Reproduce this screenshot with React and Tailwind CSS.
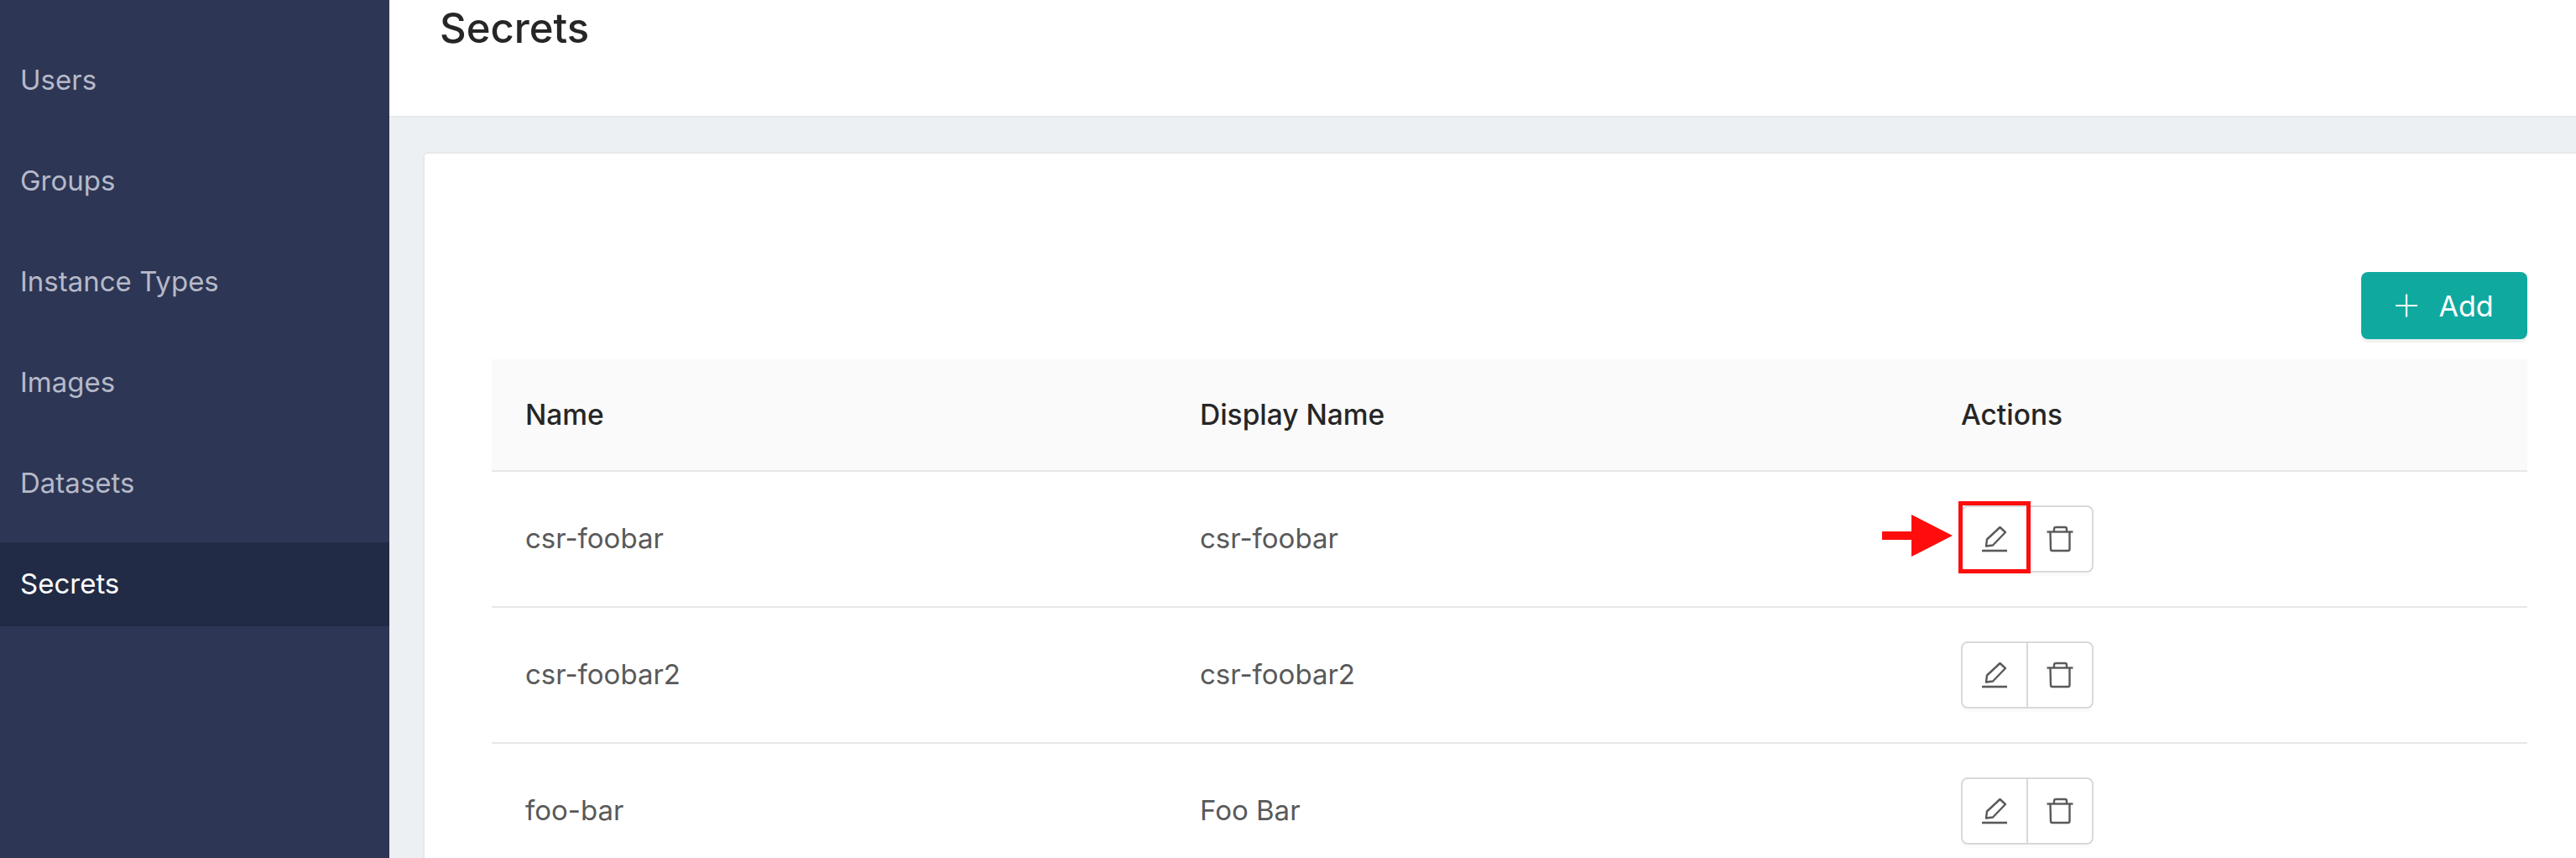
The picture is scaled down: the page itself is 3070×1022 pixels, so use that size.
const NAV = ["Users", "Groups", "Instance Types", "Images", "Datasets", "Secrets"]

const ROWS = [
  { name: "csr-foobar", display: "csr-foobar" },
  { name: "csr-foobar2", display: "csr-foobar2" },
  { name: "foo-bar", display: "Foo Bar" },
]

function PlusIcon() {
  return (
    <svg width="28" height="28" viewBox="0 0 28 28" fill="none" stroke="#ffffff" strokeWidth="2.2">
      <path d="M1 14 H27 M14 0.5 V27.5" />
    </svg>
  )
}

function EditIcon() {
  return (
    <svg width="32" height="32" viewBox="0 0 32 32" fill="none" stroke="#595959" strokeWidth="2.4">
      <path d="M6 24.5 L7 16.5 L22.5 2 L29 8 L14 23.5 Z" strokeLinejoin="round" />
      <path d="M1 30 H31" strokeWidth="2.6" />
    </svg>
  )
}

function TrashIcon() {
  return (
    <svg width="32" height="32" viewBox="0 0 32 32" fill="none" stroke="#595959" strokeWidth="2.4">
      <path d="M0.5 7.5 H31.5" />
      <path d="M9 7.5 V4 Q9 2 11 2 H22 Q24 2 24 4 V7.5" />
      <path d="M4.5 7.5 L5 28 Q5 30 7 30 H25.5 Q27.5 30 27.5 28 L27.5 7.5" strokeLinejoin="round" />
    </svg>
  )
}

function RedArrow() {
  return (
    <svg width="84" height="50" viewBox="0 0 84 50" className="absolute left-[-96px] top-[9px]">
      <rect x="0" y="20" width="36" height="10" fill="#ff0d0d" />
      <path d="M35 0 L84 25 L35 50 Z" fill="#ff0d0d" />
    </svg>
  )
}

function Actions({ highlight }) {
  return (
    <div className="relative flex h-[80px] w-[158px] rounded-lg border-2 border-[#d9d9d9] bg-white shadow-[0_4px_0_rgba(0,0,0,0.015)]">
      <button className="flex w-[78px] items-center justify-center border-r-2 border-[#d9d9d9]">
        <EditIcon />
      </button>
      <button className="flex flex-1 items-center justify-center">
        <TrashIcon />
      </button>
      {highlight && (
        <>
          <div className="absolute left-[-5px] top-[-7px] h-[86px] w-[86px] border-[5px] border-[#ff0d0d]" />
          <RedArrow />
        </>
      )}
    </div>
  )
}

export default function App() {
  return (
    <div className="flex h-[1022px] w-[3070px] overflow-hidden bg-[#ecf0f3] font-['Inter',sans-serif]">
      {/* Sidebar */}
      <aside className="w-[464px] shrink-0 bg-[#2d3654] pt-[46px]">
        {NAV.map((item) => (
          <div
            key={item}
            className={`mb-[20px] flex h-[100px] items-center px-6 text-[33px] ${
              item === "Secrets" ? "bg-[#212b45] text-white" : "text-[#b6b9c9]"
            }`}
          >
            {item}
          </div>
        ))}
      </aside>

      {/* Main */}
      <main className="flex min-w-0 flex-1 flex-col">
        <header className="h-[140px] shrink-0 border-b-2 border-[#e8e8e8] bg-white pl-[60px]">
          <h1 className="text-[49px] font-medium leading-[68px] text-[#262626]">Secrets</h1>
        </header>

        <div className="flex-1 pl-[40px] pt-[41px]">
          <div className="h-full rounded-l-md border-2 border-r-0 border-b-0 border-[#e8e8e8] bg-white pl-[80px] pr-[58px] pt-[141px]">
            <div className="flex justify-end">
              <button className="flex h-[80px] w-[198px] items-center justify-center gap-[24px] rounded-lg bg-[#10a99f] text-[34px] text-white shadow-[0_4px_0_rgba(0,0,0,0.05)]">
                <PlusIcon />
                Add
              </button>
            </div>

            <table className="mt-[24px] w-full table-fixed border-collapse text-[33px]">
              <thead>
                <tr className="h-[133px] border-b-2 border-[#e8e8e8] bg-[#fafafa] text-left text-[33.5px] text-[#262626]">
                  <th className="w-[804px] pl-[40px] font-medium">Name</th>
                  <th className="w-[907px] pl-[40px] font-medium">Display Name</th>
                  <th className="pl-[40px] font-medium">Actions</th>
                </tr>
              </thead>
              <tbody className="text-[#595959]">
                {ROWS.map((row, i) => (
                  <tr key={row.name} className="h-[162px] border-b-2 border-[#e8e8e8]">
                    <td className="pl-[40px]">{row.name}</td>
                    <td className="pl-[40px]">{row.display}</td>
                    <td className="pl-[40px]">
                      <Actions highlight={i === 0} />
                    </td>
                  </tr>
                ))}
              </tbody>
            </table>
          </div>
        </div>
      </main>
    </div>
  )
}
